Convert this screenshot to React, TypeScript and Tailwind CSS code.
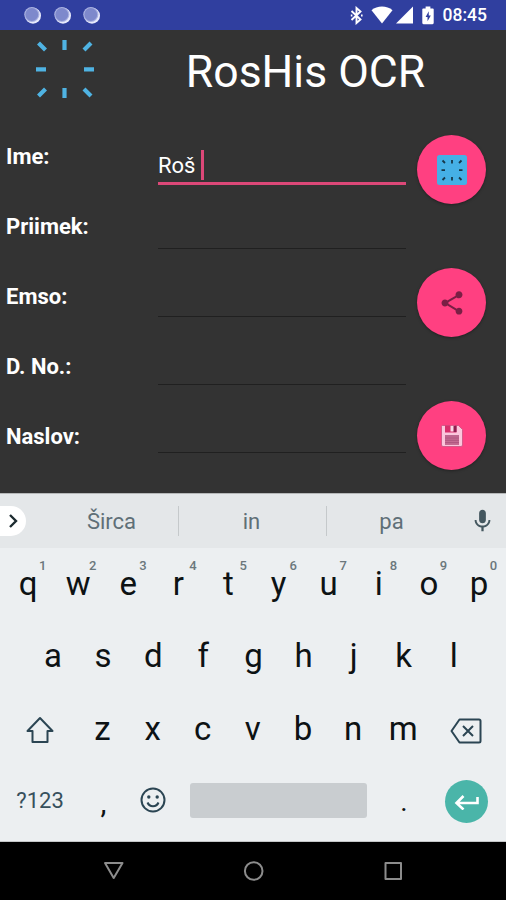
import { MdMic, MdShare } from 'react-icons/md';

interface Field {
  label: string;
  value: string;
  // distance from the previous underline to this one
  height: string;
}

const FIELDS: Field[] = [
  { label: 'Ime:', value: 'Roš', height: 'h-[64px]' },
  { label: 'Priimek:', value: '', height: 'h-[64px]' },
  { label: 'Emso:', value: '', height: 'h-[68px]' },
  { label: 'D. No.:', value: '', height: 'h-[68px]' },
  { label: 'Naslov:', value: '', height: 'h-[68px]' },
];

const TOP_ROW = ['q', 'w', 'e', 'r', 't', 'y', 'u', 'i', 'o', 'p'];
const HOME_ROW = ['a', 's', 'd', 'f', 'g', 'h', 'j', 'k', 'l'];
const BOTTOM_ROW = ['z', 'x', 'c', 'v', 'b', 'n', 'm'];

function StatusBar() {
  return (
    <header className="flex h-[30px] items-center bg-[#303f9f] pl-6 text-white">
      <div className="flex gap-[12.5px]">
        {[0, 1, 2].map((i) => (
          <svg key={i} width="17" height="18" viewBox="0 0 17 18">
            <circle cx="9" cy="9.7" r="8" fill="#e8eafc" />
            <circle cx="7.8" cy="8.5" r="7.6" fill="#a9b1e0" />
            <circle cx="7.8" cy="8.5" r="6.4" fill="#7e89cc" />
          </svg>
        ))}
      </div>
      <div className="ml-auto flex items-center pr-[19px]">
        <svg width="13" height="19" viewBox="0 0 13 19" className="mr-[8px]" fill="none" stroke="currentColor" strokeWidth="1.9">
          <path d="M1.500 5 10.500 13.500 6.500 17V2l4 3.500L1.500 14" />
          <path d="M.8 9.500h1.600M11 9.500h1.600" />
        </svg>
        <svg width="22" height="18" viewBox="0 0 22 18" className="mr-[3px]">
          <path d="M0.5 4.200C3.400 1.800 7 .5 11 .5s7.600 1.300 10.500 3.700L11 17.500z" fill="currentColor" />
        </svg>
        <svg width="17" height="18" viewBox="0 0 17 18" className="mr-[9px]">
          <path d="M17 .5v17H0z" fill="currentColor" />
        </svg>
        <svg width="12" height="19" viewBox="0 0 12 20" className="mr-[9px]">
          <path d="M3.500 .5h5v2H11a1 1 0 0 1 1 1V18a1.200 1.200 0 0 1-1.200 1.200H1.200A1.200 1.200 0 0 1 0 18V3.500a1 1 0 0 1 1-1h2.500z" fill="currentColor" />
          <path d="M6.800 5.500 3.500 11.500h2V16l3.500-6H6.800z" fill="#303f9f" />
        </svg>
        <span className="pt-px text-[17.5px] leading-[29px] font-medium">08:45</span>
      </div>
    </header>
  );
}

function ScanLogo() {
  return (
    <svg width="58" height="58" viewBox="0 0 58 58" stroke="#4fb3e3" strokeWidth="4.2">
      <path d="M28.500 0v10M28.500 48v10M0 29.300h10M48 29.300h10" />
      <path d="M2.500 3l7 7M55 3l-7 7M2.500 56l7-7M55 56l-7-7" />
    </svg>
  );
}

function ScanIcon() {
  return (
    <svg width="30" height="30" viewBox="0 0 30 30">
      <rect width="30" height="30" rx="2.5" fill="#45b0e6" />
      <path
        d="M15 5v3.500M15 22v3.500M4.500 15.200H8M22 15.200h3.500M5.500 5.500 8 8M24.500 5.500 22 8M5.500 25 8 22.500M24.500 25 22 22.500"
        stroke="#17384a"
        strokeWidth="1.8"
      />
    </svg>
  );
}

function SaveIcon() {
  return (
    <svg width="22" height="22" viewBox="0 0 22 22">
      <path d="M1.500 .5H17.500l4 4v15.500a1.500 1.500 0 0 1-1.500 1.500H2A1.500 1.500 0 0 1 .5 20V1.500A1 1 0 0 1 1.500 .5z" fill="#fbc6dc" stroke="#c9517f" strokeWidth=".8" />
      <path d="M4 .5h11.500v7H4z" fill="#d92f6c" />
      <path d="M9.500 .8h4.500V6.500H9.500z" fill="#f9d9e6" />
      <path d="M12.500 .8H15.500V7H12.500z" fill="#8f1f50" />
      <path d="M4 10.500h14V20H4z" fill="#c46c92" />
      <path d="M4 10.700h14M4 13h14M4 15.300h14M4 17.600h14" stroke="#a8527b" strokeWidth=".8" />
    </svg>
  );
}

function RoundButton({ children }: { children: React.ReactNode }) {
  return (
    <button className="flex h-[69px] w-[69px] items-center justify-center rounded-full bg-[#ff4081] shadow-[0_1px_3px_rgba(0,0,0,0.35)]">
      {children}
    </button>
  );
}

function Form() {
  return (
    <main className="h-[463px] bg-[#333333] text-white">
      <div className="flex h-[91px]">
        <div className="w-[151px] pt-[10px] pl-9">
          <ScanLogo />
        </div>
        <h1 className="w-[309px] text-center text-[44.5px] leading-[84px]">RosHis OCR</h1>
      </div>
      <div className="flex">
        <div className="flex w-[158px] flex-col pt-px pl-[6px]">
          {FIELDS.map((field) => (
            <label key={field.label} className="h-[70px] text-[22px] leading-[70px] font-bold">
              {field.label}
            </label>
          ))}
        </div>
        <div className="flex w-[248px] flex-col">
          {FIELDS.map((field) => (
            <div
              key={field.label}
              className={`flex items-end ${field.height} ${
                field.value ? 'border-b-[3px] border-[#dc4878]' : 'border-b border-[#202020]'
              }`}
            >
              {field.value && (
                <>
                  <span className="text-[22px] leading-[32px]">{field.value}</span>
                  <span className="mb-[2px] ml-[6px] h-[30px] w-[3px] bg-[#dc4878]" />
                </>
              )}
            </div>
          ))}
        </div>
        <div className="flex flex-col gap-16 pt-[14px] pl-[11px]">
          <RoundButton>
            <ScanIcon />
          </RoundButton>
          <RoundButton>
            <MdShare className="h-[28px] w-[28px] text-[#7a1f45]" />
          </RoundButton>
          <RoundButton>
            <SaveIcon />
          </RoundButton>
        </div>
      </div>
    </main>
  );
}

function Suggestions() {
  return (
    <div className="flex h-[55px] items-center border-t border-[#b5b7b8] bg-[#e4e7e9] text-[22px] text-[#5f6f77]">
      <div className="flex h-[30px] w-[26px] items-center rounded-r-full bg-white pl-[9px]">
        <svg width="9" height="14" viewBox="0 0 9 14" fill="none" stroke="#1c2b30" strokeWidth="2.4">
          <path d="M1 1l6 6-6 6" />
        </svg>
      </div>
      <span className="ml-[18px] w-[134px] pt-px pl-px text-center">Širca</span>
      <span className="h-[30px] w-px bg-[#c5c9cb]" />
      <span className="w-[147px] pt-px pr-[2px] text-center">in</span>
      <span className="h-[30px] w-px bg-[#c5c9cb]" />
      <span className="w-[129px] pt-px text-center">pa</span>
      <MdMic className="ml-[13px] h-[28px] w-[27px] text-[#44575f]" />
    </div>
  );
}

function Key({ letter, hint }: { letter: string; hint?: string }) {
  return (
    <div className="relative w-[50.1px] text-center text-[33px] leading-[72.5px] text-[#0d1214]">
      {letter}
      {hint && (
        <span className="absolute top-[10px] left-[36px] text-[13px] leading-4 font-medium text-[#6b777c]">{hint}</span>
      )}
    </div>
  );
}

function Keyboard() {
  return (
    <section className="h-[294px] border-b border-[#c4c6c7] bg-[#eceff1]">
      <div className="flex h-[72px] pl-[3px]">
        {TOP_ROW.map((letter, i) => (
          <Key key={letter} letter={letter} hint={String((i + 1) % 10)} />
        ))}
      </div>
      <div className="flex h-[72.5px] pl-[28px]">
        {HOME_ROW.map((letter) => (
          <Key key={letter} letter={letter} />
        ))}
      </div>
      <div className="flex h-[72.5px] items-center">
        <div className="flex w-[77.5px] justify-center pt-[2px] pl-[3px]">
          <svg width="28" height="28" viewBox="0 0 28 28" fill="none" stroke="#2b4553" strokeWidth="2" strokeLinejoin="round">
            <path d="M14 2 1.500 15H6.500V26h15V15h5z" />
          </svg>
        </div>
        {BOTTOM_ROW.map((letter) => (
          <Key key={letter} letter={letter} />
        ))}
        <div className="flex w-[76px] justify-center pt-[5px]">
          <svg width="32" height="26" viewBox="0 0 32 26" fill="none" stroke="#2b4553" strokeWidth="2">
            <path d="M9.500 1.500H29a1.500 1.500 0 0 1 1.500 1.500v20a1.500 1.500 0 0 1-1.500 1.500H9.500L1.500 13z" strokeLinejoin="round" />
            <path d="M13 8l10 10M23 8 13 18" />
          </svg>
        </div>
      </div>
      <div className="flex h-[71px] items-center">
        <span className="w-[80px] text-center text-[22px] text-[#37505c]">?123</span>
        <span className="w-[47px] pt-[3px] text-center text-[30px] text-[#0d1214]">,</span>
        <div className="flex w-[52px] justify-center pb-[2px]">
          <svg width="26" height="26" viewBox="0 0 26 26" fill="none" stroke="#2b4553" strokeWidth="2">
            <circle cx="13" cy="13" r="11.5" />
            <path d="M7.500 15.500c1 2.400 3 3.700 5.500 3.700s4.500-1.300 5.500-3.700" />
            <circle cx="8.8" cy="10" r="1.7" fill="#2b4553" stroke="none" />
            <circle cx="17.2" cy="10" r="1.7" fill="#2b4553" stroke="none" />
          </svg>
        </div>
        <div className="ml-[11px] h-[35px] w-[177px] rounded-[3px] bg-[#c9cdd0]" />
        <span className="w-[74px] pt-[3px] text-center text-[28px] text-[#0d1214]">.</span>
        <div className="mt-[2px] ml-[4px] flex h-[43px] w-[43px] items-center justify-center rounded-full bg-[#4ab5a9]">
          <svg width="26" height="16" viewBox="0 0 26 16" fill="none" stroke="#fff" strokeWidth="2.6">
            <path d="M23.500 3v6H3M9.500 2l-7 7 7 6.500" />
          </svg>
        </div>
      </div>
    </section>
  );
}

function NavBar() {
  return (
    <nav className="flex h-[58px] items-center bg-black">
      <svg width="506" height="20" viewBox="0 0 506 20" fill="none" stroke="#8c8c8c" strokeWidth="2" strokeLinejoin="round">
        <path d="M105 2h17.500L113.700 17z" />
        <circle cx="253.7" cy="10" r="8.8" />
        <rect x="385.5" y="2" width="15.5" height="16" />
      </svg>
    </nav>
  );
}

export default function App() {
  return (
    <div className="flex h-[900px] w-[506px] flex-col overflow-hidden bg-black font-[Roboto,sans-serif]">
      <StatusBar />
      <Form />
      <Suggestions />
      <Keyboard />
      <NavBar />
    </div>
  );
}
